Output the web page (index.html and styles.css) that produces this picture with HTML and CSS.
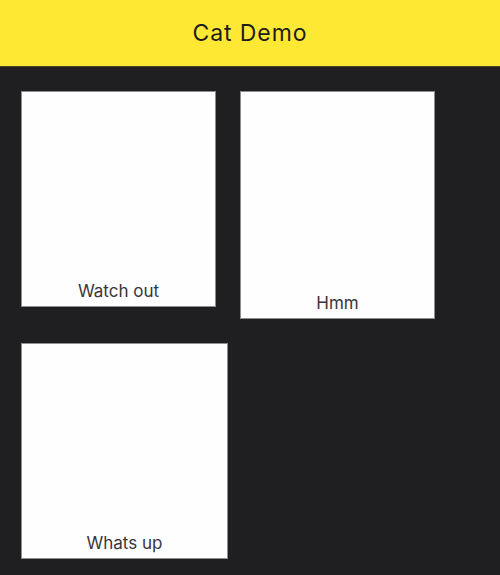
FILE: index.html
```html
<!DOCTYPE html>
<html lang="en">
<head>
<meta charset="utf-8">
<title>Cat Demo</title>
<link rel="stylesheet" href="styles.css">
</head>
<body>
  <header class="app-bar">
    <h1 class="app-title">Cat Demo</h1>
  </header>
  <main class="gallery">
    <figure class="cat-card cat-card--a">
      <div class="cat-photo"></div>
      <figcaption class="cat-caption">Watch out</figcaption>
    </figure>
    <figure class="cat-card cat-card--b">
      <div class="cat-photo"></div>
      <figcaption class="cat-caption">Hmm</figcaption>
    </figure>
    <figure class="cat-card cat-card--c">
      <div class="cat-photo"></div>
      <figcaption class="cat-caption">Whats up</figcaption>
    </figure>
  </main>
</body>
</html>
```
FILE: styles.css
```css
* {
  box-sizing: border-box;
}

html,
body {
  margin: 0;
  height: 100%;
}

body {
  background: #1f1e21;
  font-family: Inter, Roboto, "Noto Sans", "Liberation Sans", sans-serif;
}

.app-bar {
  height: 67px;
  background: #ffe833;
  border-bottom: 1px solid #4a4420;
  display: flex;
  align-items: center;
  justify-content: center;
}

.app-title {
  margin: 0;
  font-size: 23px;
  font-weight: 400;
  color: #1d1c1a;
  letter-spacing: 0.9px;
}

.gallery {
  display: flex;
  flex-wrap: wrap;
  align-items: flex-start;
  gap: 24px;
  padding: 24px 21px;
}

.cat-card {
  margin: 0;
  display: flex;
  flex-direction: column;
  background: #fefdff;
  border: 1px solid #8e8e92;
}

.cat-card--a {
  width: 195px;
  height: 216px;
}

.cat-card--b {
  width: 195px;
  height: 228px;
}

.cat-card--c {
  width: 207px;
  height: 216px;
}

.cat-photo {
  flex: 1;
}

.cat-caption {
  text-align: center;
  font-size: 17px;
  line-height: 20px;
  color: #38373b;
  padding-bottom: 5px;
}
```
